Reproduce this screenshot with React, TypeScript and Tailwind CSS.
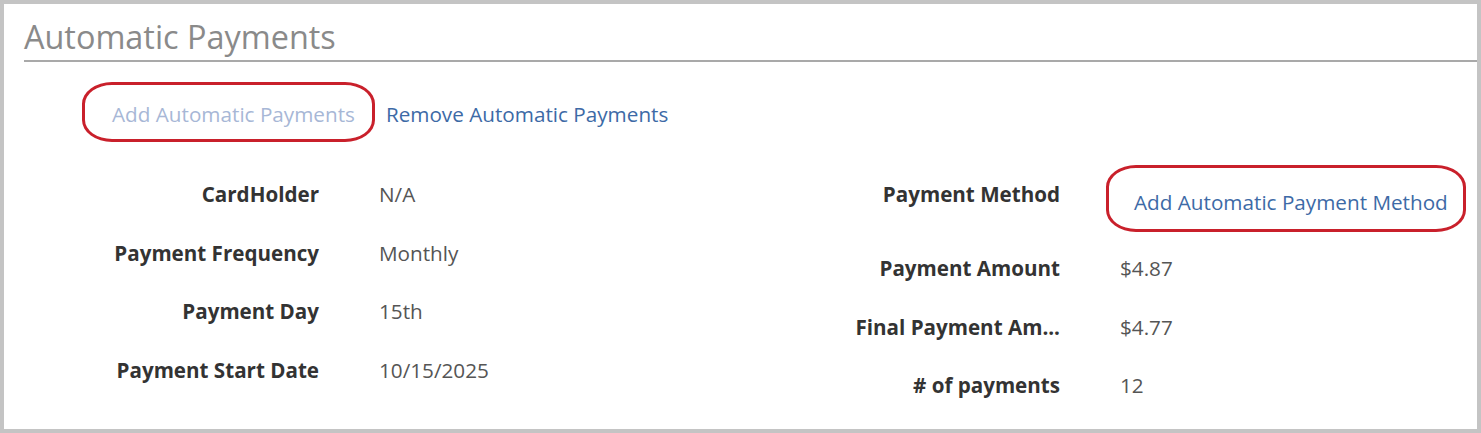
import React from 'react';

const leftRows = [
  { label: 'CardHolder', value: 'N/A' },
  { label: 'Payment Frequency', value: 'Monthly' },
  { label: 'Payment Day', value: '15th' },
  { label: 'Payment Start Date', value: '10/15/2025' },
];

const rightRows = [
  { label: 'Payment Amount', value: '$4.87' },
  { label: 'Final Payment Am...', value: '$4.77' },
  { label: '# of payments', value: '12' },
];

function Circled({ children, className }: { children: React.ReactNode; className: string }) {
  return (
    <span className="relative inline-block">
      {children}
      <span className={`pointer-events-none absolute border-[3px] border-[#c9202b] rounded-[30px/22px] ${className}`} />
    </span>
  );
}

export default function App() {
  return (
    <div
      className="w-[1481px] h-[433px] border-4 border-[#c4c4c4] bg-white overflow-hidden"
      style={{ fontFamily: '"Open Sans", sans-serif' }}
    >
      <div className="ml-[20px] pt-[14px] pb-[6px] border-b-2 border-[#a9a9a9]">
        <h1 className="text-[32.4px] leading-[36px] text-[#8a8a8a] font-normal">Automatic Payments</h1>
      </div>

      <div className="mt-[38px] pl-[108px] flex gap-[31px] text-[20.7px] leading-[28px]">
        <Circled className="-left-[30px] -right-[20px] -top-[18px] -bottom-[14px]">
          <span className="text-[#a7b7d6]">Add Automatic Payments</span>
        </Circled>
        <a className="text-[#3d6aa6]">Remove Automatic Payments</a>
      </div>

      <div className="mt-[52px] flex">
        <div className="w-[796px] flex flex-col">
          {leftRows.map((r) => (
            <div key={r.label} className="flex h-[58.5px]">
              <div className="w-[315px] text-right text-[20.6px] leading-[28px] font-bold text-[#333]">{r.label}</div>
              <div className="ml-[60px] text-[20.7px] leading-[28px] text-[#555]">{r.value}</div>
            </div>
          ))}
        </div>
        <div className="flex flex-col">
          <div className="flex h-[74px]">
            <div className="w-[260px] text-right text-[20.6px] leading-[28px] font-bold text-[#333]">Payment Method</div>
            <div className="ml-[74px] mt-[8px] text-[20.7px] leading-[28px]">
              <Circled className="-left-[28px] -right-[18px] -top-[23px] -bottom-[16px]">
                <span className="text-[#3d6aa6]">Add Automatic Payment Method</span>
              </Circled>
            </div>
          </div>
          {rightRows.map((r) => (
            <div key={r.label} className="flex h-[58.5px]">
              <div className="w-[260px] text-right text-[20.6px] leading-[28px] font-bold text-[#333]">{r.label}</div>
              <div className="ml-[60px] text-[20.7px] leading-[28px] text-[#555]">{r.value}</div>
            </div>
          ))}
        </div>
      </div>
    </div>
  );
}
